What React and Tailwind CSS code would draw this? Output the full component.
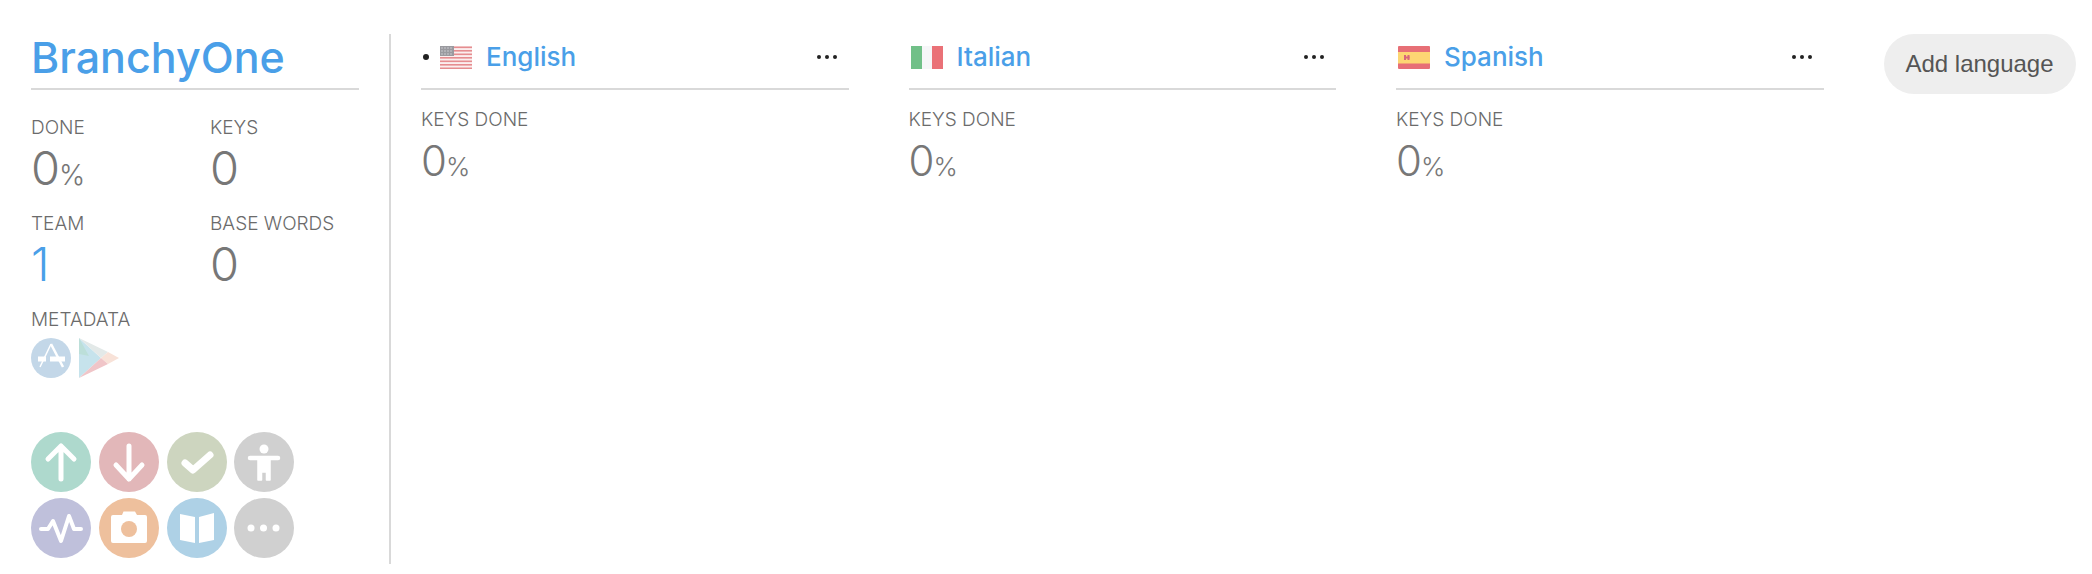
import React from "react";

const Stat = ({ label, value, pct, blue }) => (
  <div>
    <div className="text-[19px] leading-[22px] font-light text-[#6b6b6b]">{label}</div>
    <div className={`mt-[4px] text-[47px] leading-[50px] font-light ${blue ? "text-[#4a9fe8]" : "text-[#777777]"}`}>
      {value}
      {pct && <span className="-ml-[1px] text-[28px] leading-none font-light">%</span>}
    </div>
  </div>
);

const Circle = ({ bg, children }) => (
  <div className={`h-[60px] w-[60px] shrink-0 rounded-full ${bg}`}>
    <svg viewBox="0 0 60 60" className="h-full w-full" fill="none" stroke="#fff" strokeLinecap="round" strokeLinejoin="round">
      {children}
    </svg>
  </div>
);

const USFlag = () => (
  <svg viewBox="0 0 32 23" className="h-[23px] w-[32px] shrink-0">
    <rect width="32" height="23" fill="#fbeeee" />
    {[0, 3.5, 7, 10.5, 14, 17.5, 21].map((y) => (
      <rect key={y} y={y + 0.5} width="32" height="1.6" fill="#e58d90" />
    ))}
    <rect width="14" height="10" fill="#9a9a9f" />
    {[2, 5, 8].map((y) =>
      [2, 5, 8, 11].map((x) => <circle key={`${x}-${y}`} cx={x} cy={y} r="0.7" fill="#dcdcdf" />)
    )}
  </svg>
);

const ITFlag = () => (
  <svg viewBox="0 0 32 23" className="h-[23px] w-[32px] shrink-0">
    <rect width="11" height="23" fill="#71c088" />
    <rect x="11" width="10" height="23" fill="#f6f6f8" />
    <rect x="21" width="11" height="23" fill="#ea7177" />
  </svg>
);

const ESFlag = () => (
  <svg viewBox="0 0 32 23" className="h-[23px] w-[32px] shrink-0">
    <rect width="32" height="23" rx="1" fill="#e76f76" />
    <rect y="6" width="32" height="11.5" fill="#fdd673" />
    <rect x="6" y="9" width="2" height="5" fill="#d9667a" />
    <rect x="9.5" y="9" width="2" height="5" fill="#d9667a" />
    <rect x="6" y="10.5" width="5.5" height="2" fill="#d9667a" />
  </svg>
);

const Dots = () => (
  <div className="flex gap-1">
    <span className="h-1 w-1 rounded-full bg-[#222]" />
    <span className="h-1 w-1 rounded-full bg-[#222]" />
    <span className="h-1 w-1 rounded-full bg-[#222]" />
  </div>
);

const Lang = ({ name, flag, bullet }) => (
  <div className="w-[427.5px] shrink-0">
    <div className="flex h-[56px] items-start border-b-2 border-[#d9d9d9]">
      <div className="flex h-[46px] w-full items-center">
        {bullet && <span className="ml-[2px] mr-[11px] h-[6px] w-[6px] rounded-full bg-[#222]" />}
        <div className={bullet ? "" : "ml-[2px]"}>{flag}</div>
        <span className="ml-[14px] text-[26px] leading-[34px] font-medium text-[#4a9fe8]">{name}</span>
        <div className="ml-auto mr-[12px]">
          <Dots />
        </div>
      </div>
    </div>
    <div className="mt-[19px] text-[19px] leading-[22px] font-light text-[#6b6b6b]">KEYS DONE</div>
    <div className="mt-[5px] text-[42px] leading-[50px] font-light text-[#777777]">
      0<span className="-ml-[1px] text-[26px] leading-none font-light">%</span>
    </div>
  </div>
);

export default function App() {
  return (
    <div className="flex h-[574px] w-[2092px] overflow-hidden bg-white pl-[31px] pt-[34px] font-['Inter',sans-serif]">
      <aside className="h-[530px] w-[360px] shrink-0 border-r-2 border-[#d9d9d9] pr-[30px]">
        <div className="h-[56px] border-b-2 border-[#d9d9d9]">
          <h1 className="text-[43px] leading-[46px] font-medium text-[#4a9fe8]">BranchyOne</h1>
        </div>
        <div className="mt-[27px] grid grid-cols-[179px_1fr] gap-y-[20px]">
          <Stat label="DONE" value="0" pct />
          <Stat label="KEYS" value="0" />
          <Stat label="TEAM" value="1" blue />
          <Stat label="BASE WORDS" value="0" />
        </div>
        <div className="mt-[20px] text-[19px] leading-[22px] font-light text-[#6b6b6b]">METADATA</div>
        <div className="mt-[7px] flex gap-2">
          <div className="h-10 w-10 rounded-full bg-[#c3d7e8]">
            <svg viewBox="0 0 40 40" className="h-full w-full" fill="none" stroke="#fff" strokeLinecap="butt">
              <path d="M20 6 L9 29" strokeWidth="1.5" />
              <path d="M20 6 L32 29" strokeWidth="2.5" />
              <path d="M7 21 H15 M19 21 H34" strokeWidth="5" />
            </svg>
          </div>
          <svg viewBox="0 0 40 40" className="h-10 w-10">
            <path d="M0 0 L0 40 L22 20 Z" fill="#c6e3ec" />
            <path d="M0 0 L22 20 L29 14 Z" fill="#e3e9e8" />
            <path d="M0 0 L0 16 L10 18 Z" fill="#bcdfd9" />
            <path d="M29 14 L40 20 L29 26 L22 20 Z" fill="#f8e2d8" />
            <path d="M0 40 L22 20 L29 26 Z" fill="#f0c5c8" />
          </svg>
        </div>
        <div className="mt-[54px] flex gap-2">
          <Circle bg="bg-[#aed9cd]">
            <path d="M30 14 V47 M17 27 L30 14 L43 27" strokeWidth="5" />
          </Circle>
          <Circle bg="bg-[#e2b7b9]">
            <path d="M30 14 V47 M17 33 L30 47 L43 33" strokeWidth="5" />
          </Circle>
          <Circle bg="bg-[#cdd5bf]">
            <path d="M18 31 L26 38 L43 23" strokeWidth="7" />
          </Circle>
          <div className="-ml-px">
            <Circle bg="bg-[#d0d0d0]">
              <circle cx="30" cy="17" r="4.5" fill="#fff" stroke="none" />
              <path d="M16 26 H44" strokeWidth="4.5" />
              <path d="M24 27 H36 V48 H32.5 V40 H27.5 V48 H24 Z" fill="#fff" strokeWidth="1.5" />
            </Circle>
          </div>
        </div>
        <div className="mt-[6px] flex gap-2">
          <Circle bg="bg-[#bfc0db]">
            <path d="M10 31 H17 L22 23 L30 43 L38 18 L43 31 H50" strokeWidth="4" />
          </Circle>
          <Circle bg="bg-[#eec09d]">
            <path d="M14 17 H23 L24.5 13.5 H36 L38 17 H46 Q48 17 48 19 V43 Q48 45 46 45 H14 Q12 45 12 43 V19 Q12 17 14 17 Z" fill="#fff" stroke="none" />
            <circle cx="30" cy="31" r="8" fill="#eec09d" stroke="none" />
          </Circle>
          <Circle bg="bg-[#aed1e6]">
            <path d="M13 16 L28 19 V45 L13 42 Z" fill="#fff" stroke="none" />
            <path d="M47 15 L32 19 V45 L47 42 Z" fill="#fff" stroke="none" />
          </Circle>
          <div className="-ml-px">
            <Circle bg="bg-[#d0d0d0]">
              <circle cx="17" cy="30" r="3.5" fill="#fff" stroke="none" />
              <circle cx="29.5" cy="30" r="3.5" fill="#fff" stroke="none" />
              <circle cx="42" cy="30" r="3.5" fill="#fff" stroke="none" />
            </Circle>
          </div>
        </div>
      </aside>
      <main className="ml-[30px] flex gap-[60px]">
        <Lang name="English" flag={<USFlag />} bullet />
        <Lang name="Italian" flag={<ITFlag />} />
        <Lang name="Spanish" flag={<ESFlag />} />
      </main>
      <div className="ml-[60px]">
        <button className="h-[60px] w-[192px] rounded-[30px] bg-[#eeeeee] font-['Liberation_Sans',sans-serif] text-[24px] text-[#555555]">
          Add language
        </button>
      </div>
    </div>
  );
}
